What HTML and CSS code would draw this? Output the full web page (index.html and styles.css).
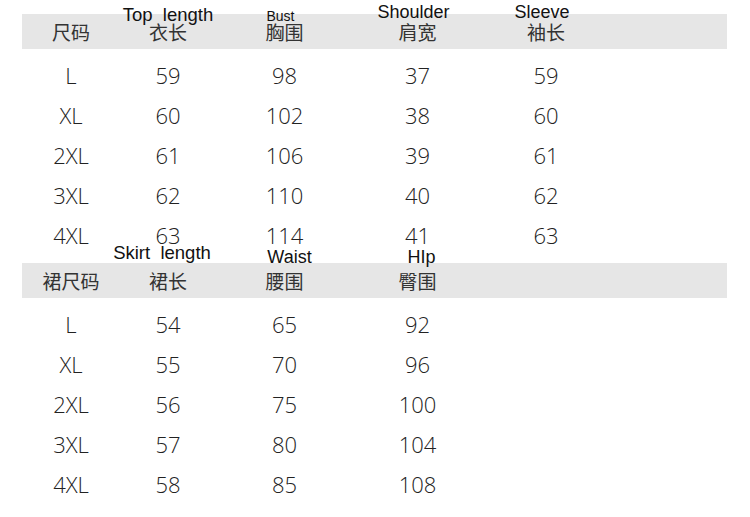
FILE: index.html
```html
<!DOCTYPE html>
<html lang="zh-CN">
<head>
<meta charset="utf-8">
<title>尺码表</title>
<link rel="stylesheet" href="styles.css">
</head>
<body>
<div class="chart">
  <div class="table top-table">
    <div class="row head">
      <div class="cell">尺码</div>
      <div class="cell"><span class="en lbl-top">Top  length</span>衣长</div>
      <div class="cell"><span class="en lbl-bust">Bust</span>胸围</div>
      <div class="cell"><span class="en lbl-shoulder">Shoulder</span>肩宽</div>
      <div class="cell"><span class="en lbl-sleeve">Sleeve</span>袖长</div>
      <div class="cell"></div>
    </div>
    <div class="body">
      <div class="row"><div class="cell">L</div><div class="cell">59</div><div class="cell">98</div><div class="cell">37</div><div class="cell">59</div><div class="cell"></div></div>
      <div class="row"><div class="cell">XL</div><div class="cell">60</div><div class="cell">102</div><div class="cell">38</div><div class="cell">60</div><div class="cell"></div></div>
      <div class="row"><div class="cell">2XL</div><div class="cell">61</div><div class="cell">106</div><div class="cell">39</div><div class="cell">61</div><div class="cell"></div></div>
      <div class="row"><div class="cell">3XL</div><div class="cell">62</div><div class="cell">110</div><div class="cell">40</div><div class="cell">62</div><div class="cell"></div></div>
      <div class="row"><div class="cell">4XL</div><div class="cell">63</div><div class="cell">114</div><div class="cell">41</div><div class="cell">63</div><div class="cell"></div></div>
    </div>
  </div>
  <div class="table skirt-table">
    <div class="row head">
      <div class="cell">裙尺码</div>
      <div class="cell"><span class="en lbl-skirt">Skirt  length</span>裙长</div>
      <div class="cell"><span class="en lbl-waist">Waist</span>腰围</div>
      <div class="cell"><span class="en lbl-hip">HIp</span>臀围</div>
      <div class="cell"></div>
      <div class="cell"></div>
    </div>
    <div class="body">
      <div class="row"><div class="cell">L</div><div class="cell">54</div><div class="cell">65</div><div class="cell">92</div><div class="cell"></div><div class="cell"></div></div>
      <div class="row"><div class="cell">XL</div><div class="cell">55</div><div class="cell">70</div><div class="cell">96</div><div class="cell"></div><div class="cell"></div></div>
      <div class="row"><div class="cell">2XL</div><div class="cell">56</div><div class="cell">75</div><div class="cell">100</div><div class="cell"></div><div class="cell"></div></div>
      <div class="row"><div class="cell">3XL</div><div class="cell">57</div><div class="cell">80</div><div class="cell">104</div><div class="cell"></div><div class="cell"></div></div>
      <div class="row"><div class="cell">4XL</div><div class="cell">58</div><div class="cell">85</div><div class="cell">108</div><div class="cell"></div><div class="cell"></div></div>
    </div>
  </div>
</div>
</body>
</html>
```
FILE: styles.css
```css
html, body {
  margin: 0;
  padding: 0;
  background: #ffffff;
}

.chart {
  width: 750px;
  height: 517px;
  overflow: hidden;
  padding-left: 22px;
  box-sizing: border-box;
}

.table {
  width: 705px;
}

.top-table {
  margin-top: 14px;
}

.skirt-table {
  margin-top: 8px;
}

.row {
  display: grid;
  grid-template-columns: 98px 96px 137px 129px 128px 1fr;
}

.head {
  height: 35px;
  background: #e6e6e6;
  align-items: center;
}

.head .cell {
  position: relative;
  text-align: center;
  font-family: "Noto Sans CJK SC", "Noto Sans", sans-serif;
  font-size: 19px;
  line-height: 1;
  color: #333333;
  margin-top: -1px;
}

.body {
  padding-top: 6px;
}

.body .cell {
  height: 40px;
  line-height: 40px;
  text-align: center;
  font-family: "Open Sans", "Noto Sans", sans-serif;
  font-weight: 300;
  font-size: 22px;
  color: #222222;
}

.en {
  position: absolute;
  white-space: pre;
  font-family: "Liberation Sans", Arial, sans-serif;
  font-size: 18px;
  line-height: 1;
  color: #111111;
  transform: translateX(-50%);
}

.lbl-top { left: 50%; top: -16px; font-size: 18.5px; }
.lbl-bust { left: calc(50% - 4px); top: -13px; font-size: 14px; }
.lbl-shoulder { left: calc(50% - 4px); top: -19px; }
.lbl-sleeve { left: calc(50% - 4px); top: -19px; }
.lbl-skirt { left: calc(50% - 6px); top: -27px; font-size: 18.5px; }
.lbl-waist { left: calc(50% + 5px); top: -23px; }
.lbl-hip { left: calc(50% + 4px); top: -23px; }
```
